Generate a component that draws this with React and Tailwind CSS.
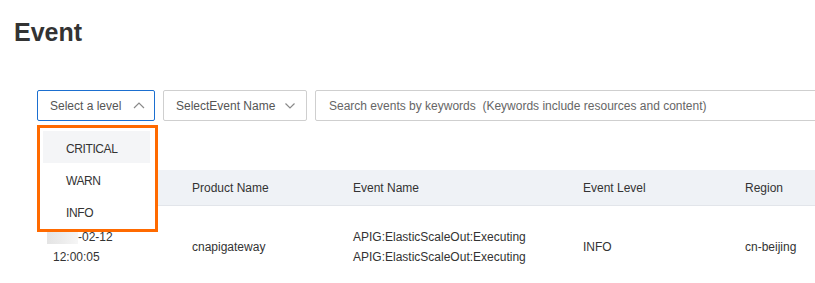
import React from 'react';

function ChevronUp() {
  return (
    <svg width="12" height="7" viewBox="0 0 12 7" fill="none" className="shrink-0">
      <path d="M1 6L6 1l5 5" stroke="#8a8a8a" strokeWidth="1.2" />
    </svg>
  );
}

function ChevronDown() {
  return (
    <svg width="10" height="6" viewBox="0 0 10 6" fill="none" className="shrink-0">
      <path d="M0.5 0.5l4.5 4.5L9.5 0.5" stroke="#8a8a8a" strokeWidth="1.2" />
    </svg>
  );
}

const levels = ['CRITICAL', 'WARN', 'INFO'];

export default function App() {
  return (
    <div className="w-[815px] h-[283px] overflow-hidden bg-white text-[#333] font-['Liberation_Sans',Arial,sans-serif]">
      <h1 className="pl-[14px] pt-[17px] text-[25px] leading-[30px] font-bold text-[#333]">Event</h1>

      <div className="mt-[43px] ml-[37px] flex gap-2 w-[900px]">
        <div className="relative w-[118px] h-[31px] shrink-0">
          <div className="h-full flex items-center justify-between pl-[12px] pr-[9px] border border-[#1b6fd0] rounded-[2px] text-[12px] text-[#555]">
            <span>Select a level</span>
            <ChevronUp />
          </div>
          <div className="absolute left-0 top-[35px] w-[121px] h-[107px] bg-white border-[3px] border-[#ff6a00] pt-[3px] pl-[3px] pr-[5px] z-10">
            {levels.map((l, i) => (
              <div
                key={l}
                className={`h-[32px] flex items-center pl-[23px] pt-[3px] text-[12px] tracking-[-0.4px] text-[#333] ${i === 0 ? 'bg-[#f4f5f7]' : ''}`}
              >
                {l}
              </div>
            ))}
          </div>
        </div>

        <div className="w-[144px] h-[31px] shrink-0 flex items-center justify-between pl-[12px] pr-[11px] border border-[#cfcfcf] rounded-[2px] text-[12px] text-[#555]">
          <span>SelectEvent Name</span>
          <ChevronDown />
        </div>

        <div className="w-[560px] h-[31px] shrink-0 flex items-center pl-[13px] border border-[#cfcfcf] rounded-[2px] text-[12px] text-[#666]">
          Search events by keywords&nbsp; (Keywords include resources and content)
        </div>
      </div>

      <div className="mt-[49px] ml-[37px] w-[800px] text-[12px] text-[#333]">
        <div className="h-[36px] flex items-center bg-[#eff2f6] border-b border-[#e2e5ea]">
          <div className="w-[155px]" />
          <div className="w-[161px]">Product Name</div>
          <div className="w-[230px]">Event Name</div>
          <div className="w-[162px]">Event Level</div>
          <div className="flex-1">Region</div>
        </div>
        <div className="flex items-center h-[82px] leading-[20px]">
          <div className="w-[155px] pl-[10px]">
            <div className="flex items-center">
              <span className="inline-block w-[31px] h-[14px] bg-gradient-to-r from-[#e4e4e4] via-[#ececec] to-[#f6f6f6]" />
              <span>-02-12</span>
            </div>
            <div className="pl-[6px]">12:00:05</div>
          </div>
          <div className="w-[161px]">cnapigateway</div>
          <div className="w-[230px]">
            <div>APIG:ElasticScaleOut:Executing</div>
            <div>APIG:ElasticScaleOut:Executing</div>
          </div>
          <div className="w-[162px]">INFO</div>
          <div className="flex-1">cn-beijing</div>
        </div>
      </div>
    </div>
  );
}
